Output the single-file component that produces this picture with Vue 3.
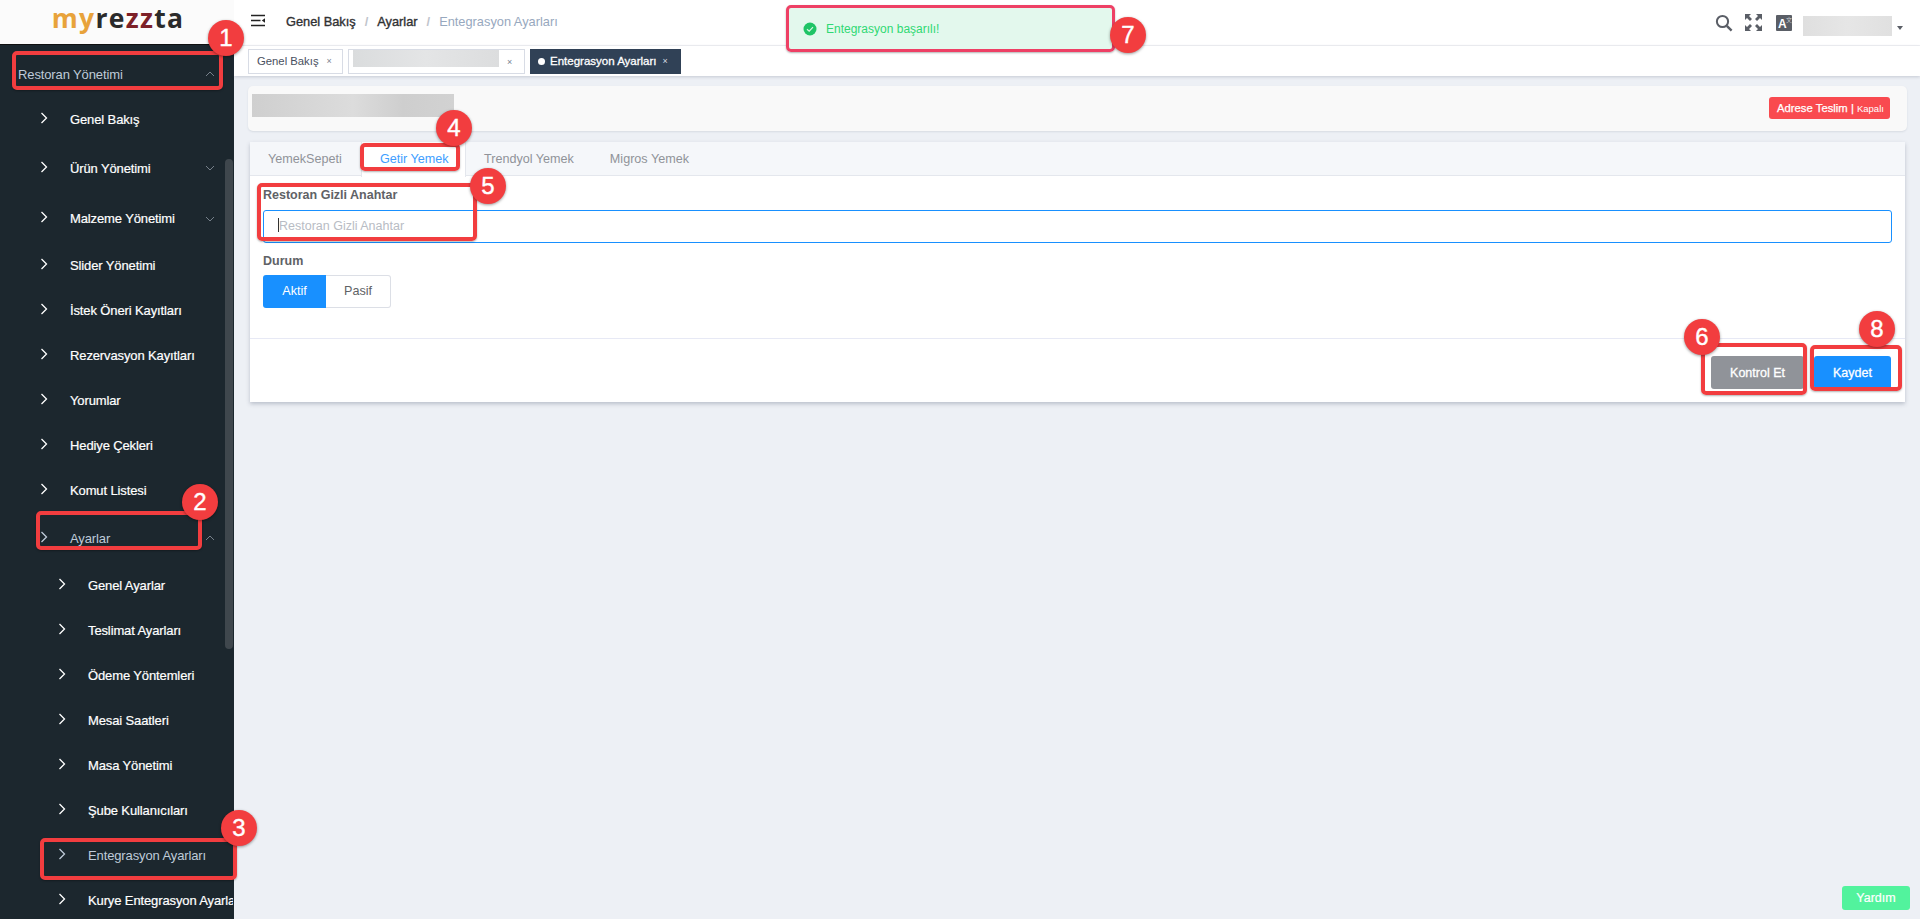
<script setup>
const menu = [
  { label: 'Restoran Yönetimi', level: 0, size: 'r46', open: true, active: true },
  { label: 'Genel Bakış', level: 1, size: 'r45' },
  { label: 'Ürün Yönetimi', level: 1, size: 'r52', down: true },
  { label: 'Malzeme Yönetimi', level: 1, size: 'r49', down: true },
  { label: 'Slider Yönetimi', level: 1, size: 'r45' },
  { label: 'İstek Öneri Kayıtları', level: 1, size: 'r45' },
  { label: 'Rezervasyon Kayıtları', level: 1, size: 'r45' },
  { label: 'Yorumlar', level: 1, size: 'r45' },
  { label: 'Hediye Çekleri', level: 1, size: 'r45' },
  { label: 'Komut Listesi', level: 1, size: 'r45' },
  { label: 'Ayarlar', level: 1, size: 'r50', open: true, active: true },
  { label: 'Genel Ayarlar', level: 2, size: 'r45' },
  { label: 'Teslimat Ayarları', level: 2, size: 'r45' },
  { label: 'Ödeme Yöntemleri', level: 2, size: 'r45' },
  { label: 'Mesai Saatleri', level: 2, size: 'r45' },
  { label: 'Masa Yönetimi', level: 2, size: 'r45' },
  { label: 'Şube Kullanıcıları', level: 2, size: 'r45' },
  { label: 'Entegrasyon Ayarları', level: 2, size: 'r45', active: true },
  { label: 'Kurye Entegrasyon Ayarları', level: 2, size: 'r45' },
]
const boxes = [
  { x: 12, y: 51, w: 211, h: 39 },
  { x: 36, y: 511, w: 166, h: 39 },
  { x: 40, y: 838, w: 197, h: 42 },
  { x: 360, y: 143, w: 100, h: 28 },
  { x: 257, y: 183, w: 220, h: 58 },
  { x: 1701, y: 343, w: 106, h: 52 },
  { x: 786, y: 5, w: 329, h: 47 },
  { x: 1810, y: 345, w: 92, h: 46 },
]
const badges = [
  { n: 1, x: 226, y: 38 },
  { n: 2, x: 200, y: 502 },
  { n: 3, x: 239, y: 828 },
  { n: 4, x: 454, y: 128 },
  { n: 5, x: 488, y: 186 },
  { n: 6, x: 1702, y: 337 },
  { n: 7, x: 1128, y: 35 },
  { n: 8, x: 1877, y: 329 },
]
</script>

<template>
  <div class="app">
    <aside class="sidebar">
      <div class="logo">
        <span class="l-or">my</span><span class="l-dk">re</span><span class="l-rd">zz</span><span class="l-dk">ta</span>
      </div>
      <div class="menu-wrap">
        <ul class="menu">
          <li v-for="m in menu" :key="m.label" :class="['item', m.size, 'lv' + m.level, { active: m.active }]">
            <svg v-if="m.level > 0" class="arrow" width="8" height="12" viewBox="0 0 8 12"><path d="M1.5 1 L6.5 6 L1.5 11" fill="none" stroke="currentColor" stroke-width="1.3"/></svg>
            <span class="label">{{ m.label }}</span>
            <svg v-if="m.open" class="caret" width="10" height="6" viewBox="0 0 10 6"><path d="M1 5 L5 1 L9 5" fill="none" stroke="#76808a" stroke-width="1"/></svg>
            <svg v-if="m.down" class="caret" width="10" height="6" viewBox="0 0 10 6"><path d="M1 1 L5 5 L9 1" fill="none" stroke="#76808a" stroke-width="1"/></svg>
          </li>
        </ul>
        <div class="scroll-thumb"></div>
      </div>
    </aside>

    <main class="main">
      <header class="topbar">
        <svg class="hamb" width="16" height="14" viewBox="0 0 16 14"><path d="M1 1.5H15M1 6.5H10.5M1 11.5H15" stroke="#222" stroke-width="1.4" fill="none"/><path d="M15 4.2V8.8L11.8 6.5Z" fill="#222"/></svg>
        <nav class="crumbs">
          <span class="c-strong">Genel Bakış</span><span class="sep">/</span>
          <span class="c-strong">Ayarlar</span><span class="sep">/</span>
          <span class="c-last">Entegrasyon Ayarları</span>
        </nav>
        <div class="tools">
          <svg width="18" height="18" viewBox="0 0 18 18"><circle cx="7.5" cy="7.5" r="5.6" fill="none" stroke="#5a5e66" stroke-width="2"/><path d="M11.8 11.8 L16.6 16.6" stroke="#5a5e66" stroke-width="2.4"/></svg>
          <svg width="17" height="17" viewBox="0 0 17 17" fill="#5a5e66"><path d="M0 0H6L4 2L7 5L5 7L2 4L0 6Z"/><path d="M17 0V6L15 4L12 7L10 5L13 2L11 0Z"/><path d="M0 17V11L2 13L5 10L7 12L4 15L6 17Z"/><path d="M17 17H11L13 15L10 12L12 10L15 13L17 11Z"/></svg>
          <div class="lang"><span class="lang-a">A</span><span class="lang-x">文</span></div>
          <div class="user">
            <div class="blur blur-user"></div>
            <span class="user-caret"></span>
          </div>
        </div>
      </header>

      <div class="tags">
        <div class="tag tag-first">Genel Bakış <span class="x">×</span></div>
        <div class="tag tag-blur"><div class="blur blur-tag"></div><span class="x">×</span></div>
        <div class="tag tag-active"><span class="dot"></span>Entegrasyon Ayarları <span class="x">×</span></div>
      </div>

      <section class="content">
        <div class="head-card">
          <div class="blur blur-head"></div>
          <div class="status">Adrese Teslim | <small>Kapalı</small></div>
        </div>

        <div class="card">
          <div class="tabs">
            <div class="tab">YemekSepeti</div>
            <div class="tab tab-on">Getir Yemek</div>
            <div class="tab">Trendyol Yemek</div>
            <div class="tab">Migros Yemek</div>
          </div>
          <form class="form" @submit.prevent>
            <label class="f-label">Restoran Gizli Anahtar</label>
            <div class="input"><span class="cursor"></span>Restoran Gizli Anahtar</div>
            <label class="f-label f-second">Durum</label>
            <div class="radio">
              <span class="r-on">Aktif</span><span class="r-off">Pasif</span>
            </div>
          </form>
          <div class="actions">
            <button class="btn btn-gray" type="button">Kontrol Et</button>
            <button class="btn btn-blue" type="button">Kaydet</button>
          </div>
        </div>
      </section>
    </main>

    <div class="toast">
      <svg width="14" height="14" viewBox="0 0 14 14"><circle cx="7" cy="7" r="6.5" fill="#1fc466"/><path d="M4 7.2 L6.2 9.2 L10 5.2" fill="none" stroke="#d8f5e4" stroke-width="1.2"/></svg>
      <span>Entegrasyon başarılı!</span>
    </div>

    <button class="help" type="button">Yardım</button>

    <div v-for="(b, i) in boxes" :key="'b' + i" class="mark" :style="{ left: b.x + 'px', top: b.y + 'px', width: b.w + 'px', height: b.h + 'px' }" :class="{ pink: i === 6 }"></div>
    <div v-for="b in badges" :key="'n' + b.n" class="badge" :style="{ left: b.x - 18 + 'px', top: b.y - 18 + 'px' }">{{ b.n }}</div>
  </div>
</template>

<style>
html, body { margin: 0; padding: 0; height: 100%; overflow: hidden; }
</style>

<style scoped>
* { box-sizing: border-box; }
.app {
  position: relative;
  display: flex;
  width: 100%;
  height: 919px;
  overflow: hidden;
  font-family: "Liberation Sans", Arial, sans-serif;
  background: #edf0f5;
}
.sidebar {
  width: 234px;
  flex: none;
  background: #1c272e;
  display: flex;
  flex-direction: column;
  overflow: hidden;
}
.logo {
  height: 45px;
  flex: none;
  background: #fbfbfb;
  border-bottom: 1px solid #111;
  text-align: center;
  font: 700 26.5px/37px "Open Sans", sans-serif;
  letter-spacing: 1.3px;
  padding-left: 2px;
}
.l-or { color: #e8a33b; }
.l-dk { color: #2b2b2b; }
.l-rd { color: #7d2128; }
.menu-wrap { position: relative; flex: 1; min-height: 0; overflow: hidden; padding-top: 6px; }
.menu { list-style: none; margin: 0; padding: 0; }
.item {
  display: flex;
  align-items: center;
  color: #fff;
  font-size: 13px;
  letter-spacing: -0.12px;
  -webkit-text-stroke: 0.2px currentColor;
  white-space: nowrap;
  position: relative;
  overflow: hidden;
  width: 233px;
}
.item.active { color: #bfcbd9; -webkit-text-stroke: 0; }
.r45 { height: 45px; }
.r46 { height: 46px; }
.r49 { height: 49px; }
.r50 { height: 50px; }
.r52 { height: 52px; }
.lv0 { padding-left: 18px; }
.lv1 { padding-left: 40px; }
.lv2 { padding-left: 58px; }
.arrow { flex: none; margin-right: 22px; margin-top: -3px; }
.caret { position: absolute; right: 18px; top: 50%; margin-top: -3px; }
.scroll-thumb {
  position: absolute;
  right: 1px;
  top: 114px;
  width: 8px;
  height: 490px;
  background: #3f474d;
  border-radius: 4px;
}

.main { flex: 1; min-width: 0; display: flex; flex-direction: column; }
.topbar {
  height: 46px;
  flex: none;
  background: #fff;
  border-bottom: 1px solid #f0f1f4;
  display: flex;
  align-items: center;
  padding: 0 17px 0 16px;
}
.hamb { flex: none; margin-top: -3px; }
.crumbs { margin-left: 20px; font-size: 12.8px; color: #97a8be; display: flex; align-items: center; margin-top: -2px; }
.c-strong { color: #303133; -webkit-text-stroke: 0.35px #303133; }
.sep { color: #c0c4cc; margin: 0 9px; font-weight: 700; }
.tools { margin-left: auto; display: flex; align-items: center; gap: 12px; }
.lang {
  width: 16px; height: 16px; background: #5a5e66; border-radius: 1px; position: relative; color: #fff;
  margin-left: 2px;
}
.lang-a { position: absolute; left: 2px; top: 3px; font-size: 12px; font-weight: 700; line-height: 13px; }
.lang-x { position: absolute; right: 0; top: 1px; font: 6px/7px "Noto Sans CJK SC", sans-serif; color: #c9ccd1; }
.user { display: flex; align-items: center; gap: 5px; margin-left: -1px; }
.user-caret { width: 0; height: 0; border: 3px solid transparent; border-top: 4px solid #5a5e66; border-bottom: 0; margin-top: 11px; }
.blur { background: linear-gradient(90deg, #dfdfdf, #e6e6e6 50%, #e0e0e0); flex: none; }
.blur-user { width: 89px; height: 20px; margin-top: 6px; }

.tags {
  height: 30px;
  flex: none;
  background: #fff;
  box-shadow: 0 1px 3px rgba(60, 70, 100, .22);
  padding-top: 3px;
  padding-left: 14px;
  display: flex;
  gap: 5px;
  position: relative;
}
.tag {
  height: 25px;
  border: 1px solid #d8dce5;
  background: #fff;
  color: #495060;
  font-size: 11.3px;
  line-height: 23px;
  padding: 0 8px;
  display: flex;
  align-items: center;
  white-space: nowrap;
}
.tag-first { width: 95px; }
.x { font-size: 9px; color: #7a8290; margin-left: 8px; }
.tag-blur { width: 177px; padding: 0 4px; align-items: flex-start; }
.blur-tag { width: 146px; height: 17px; background: linear-gradient(90deg, #dadcdd, #e4e5e6 50%, #dcddde); }
.tag-blur .x { margin: 4px 0 0 8px; line-height: 16px; }
.tag-active { background: #304156; border-color: #304156; color: #fff; width: 151px; padding: 0 7px; -webkit-text-stroke: 0.3px #fff; font-size: 11.5px; }
.tag-active .x { color: #d6dbe2; -webkit-text-stroke: 0; margin-left: 6px; }
.dot { width: 7px; height: 7px; border-radius: 50%; background: #fff; margin-right: 5px; flex: none; }

.content { flex: 1; min-height: 0; padding: 10px 13px 0 14px; }
.head-card {
  height: 45px;
  background: #f9f9f9;
  border-radius: 5px;
  box-shadow: 0 1px 2px rgba(60, 70, 100, .12);
  display: flex;
  align-items: flex-start;
  justify-content: space-between;
  padding: 8px 17px 0 4px;
}
.blur-head { width: 202px; height: 23px; background: linear-gradient(90deg, #cfcfcf, #dcdcdc 50%, #cecece 75%, #d2d2d2); }
.status {
  height: 22px;
  margin-top: 3px;
  background: #f94a4f;
  color: #fff;
  font-size: 11.3px;
  line-height: 22px;
  border-radius: 3px;
  padding: 0 8px;
  -webkit-text-stroke: 0.25px #fff;
  width: 121px;
  white-space: nowrap;
}
.status small { font-size: 9.5px; -webkit-text-stroke: 0; }

.card {
  margin: 11px 2px 0;
  height: 260px;
  background: #fff;
  box-shadow: 0 2px 4px rgba(40, 50, 80, .25);
  display: flex;
  flex-direction: column;
}
.tabs {
  height: 34px;
  flex: none;
  background: #f5f7fa;
  border-bottom: 1px solid #e4e7ed;
  display: flex;
  font-size: 12.6px;
  color: #909399;
}
.tab { padding: 0 18px; line-height: 35px; height: 34px; white-space: nowrap; }
.tab:first-child { width: 111px; padding-left: 18px; }
.tab-on {
  background: #fff;
  color: #409eff;
  border-left: 1px solid #e4e7ed;
  border-right: 1px solid #e4e7ed;
  height: 35px;
  width: 105px;
  padding: 0 18px;
}
.form { flex: 1; padding: 11px 13px 0 13px; }
.f-label { display: block; font-size: 12.5px; font-weight: 700; color: #606266; line-height: 16px; }
.f-second { margin-top: 10px; }
.input {
  margin-top: 7px;
  height: 33px;
  border: 1px solid #1890ff;
  border-radius: 3px;
  font-size: 12.5px;
  line-height: 31px;
  padding-left: 14px;
  color: #b8bcc4;
  position: relative;
}
.cursor { display: inline-block; width: 1px; height: 14px; background: #333; vertical-align: -2px; }
.radio { margin-top: 6px; display: flex; font-size: 12.6px; height: 33px; }
.r-on {
  width: 63px; background: #1890ff; color: #fff; text-align: center; line-height: 33px;
  border-radius: 3px 0 0 3px;
}
.r-off {
  width: 65px; border: 1px solid #dcdfe6; border-left: 0; color: #606266; text-align: center; line-height: 31px;
  border-radius: 0 3px 3px 0;
}
.actions {
  height: 64px;
  flex: none;
  border-top: 1px solid #e7e9f5;
  display: flex;
  justify-content: flex-end;
  align-items: flex-start;
  padding: 18px 14px 0 0;
  gap: 10px;
}
.btn {
  border: 0;
  height: 33px;
  margin-top: -1px;
  font: 400 12.5px "Liberation Sans", Arial, sans-serif;
  -webkit-text-stroke: 0.3px #fff;
  color: #fff;
  border-radius: 3px;
}
.btn-gray { width: 93px; background: #909399; }
.btn-blue { width: 77px; background: #1890ff; }

.toast {
  position: absolute;
  left: 788px;
  top: 7px;
  width: 325px;
  height: 43px;
  background: #e3f8ed;
  border-radius: 3px;
  display: flex;
  align-items: center;
  padding: 1px 0 0 15px;
  gap: 9px;
  color: #2fd873;
  font-size: 12px;
}
.help {
  position: absolute;
  left: 1842px;
  top: 886px;
  width: 68px;
  height: 24px;
  background: #52f39d;
  color: #fff;
  border: 0;
  border-radius: 3px;
  font: 400 12.5px "Liberation Sans", Arial, sans-serif;
  -webkit-text-stroke: 0.2px #fff;
}
.mark {
  position: absolute;
  border: 4px solid #f23d3f;
  border-radius: 5px;
  box-shadow: 0 1px 2px rgba(0, 0, 0, .3);
  pointer-events: none;
}
.mark.pink { border-width: 3px; border-color: #ee4065; }
.badge {
  position: absolute;
  width: 36px;
  height: 36px;
  border-radius: 50%;
  background: #f23d3f;
  color: #fff;
  font-size: 24px;
  -webkit-text-stroke: 0.4px #fff;
  line-height: 36px;
  text-align: center;
  box-shadow: 0 1px 3px rgba(0, 0, 0, .4);
}
</style>
